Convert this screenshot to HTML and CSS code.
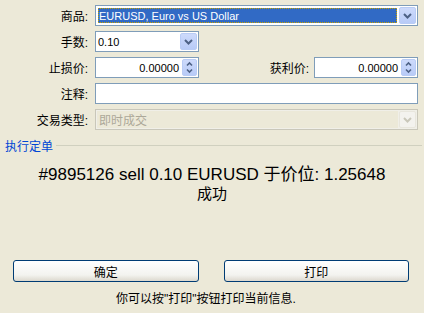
FILE: index.html
```html
<!DOCTYPE html>
<html lang="zh">
<head>
<meta charset="utf-8">
<link rel="stylesheet" href="styles.css">
</head>
<body>
<div class="dialog">
  <div class="form">
    <label class="lbl">商品:</label>
    <div class="combo wide focus">
      <div class="combo-text"><span class="sel">EURUSD, Euro vs US Dollar</span></div>
      <div class="btn-arrow"><svg width="9" height="6" viewBox="0 0 9 6"><path d="M1 1 L4.5 4.5 L8 1" fill="none" stroke="#4D6185" stroke-width="2"/></svg></div>
    </div>

    <label class="lbl">手数:</label>
    <div class="combo">
      <div class="combo-text latin">0.10</div>
      <div class="btn-arrow"><svg width="9" height="6" viewBox="0 0 9 6"><path d="M1 1 L4.5 4.5 L8 1" fill="none" stroke="#4D6185" stroke-width="2"/></svg></div>
    </div>
    <div class="span2"></div>

    <label class="lbl">止损价:</label>
    <div class="spin">
      <div class="spin-text">0.00000</div>
      <div class="spin-btn"><svg width="7" height="13" viewBox="0 0 7 13"><path d="M1 4.5 L3.5 2 L6 4.5 M1 8.5 L3.5 11 L6 8.5" fill="none" stroke="#4D6185" stroke-width="1.6"/></svg></div>
    </div>
    <label class="lbl lbl-r">获利价:</label>
    <div class="spin">
      <div class="spin-text">0.00000</div>
      <div class="spin-btn"><svg width="7" height="13" viewBox="0 0 7 13"><path d="M1 4.5 L3.5 2 L6 4.5 M1 8.5 L3.5 11 L6 8.5" fill="none" stroke="#4D6185" stroke-width="1.6"/></svg></div>
    </div>

    <label class="lbl">注释:</label>
    <div class="input wide"></div>

    <label class="lbl">交易类型:</label>
    <div class="combo wide disabled">
      <div class="combo-text">即时成交</div>
      <div class="btn-arrow"><svg width="9" height="6" viewBox="0 0 9 6"><path d="M1 1 L4.5 4.5 L8 1" fill="none" stroke="#C9C7BA" stroke-width="2"/></svg></div>
    </div>
  </div>

  <div class="group">
    <div class="group-head"><span class="group-title">执行定单</span><span class="group-line"></span></div>
    <div class="group-body">
      <div class="result">#9895126 sell 0.10 EURUSD 于价位: 1.25648</div>
      <div class="result-sub">成功</div>
    </div>
  </div>

  <div class="buttons">
    <button class="xp-btn">确定</button>
    <button class="xp-btn">打印</button>
  </div>
  <div class="hint">你可以按"打印"按钮打印当前信息.</div>
</div>
</body>
</html>
```

FILE: styles.css
```css
html, body {
  margin: 0;
  padding: 0;
}
body {
  background: #ECE9D8;
  font-family: "Liberation Sans", "Noto Sans CJK SC", sans-serif;
  font-size: 12px;
  color: #000;
  width: 424px;
  height: 313px;
  overflow: hidden;
}
.dialog {
  display: flex;
  flex-direction: column;
  height: 313px;
}
.form {
  display: grid;
  grid-template-columns: 88px 104px 1fr 104px;
  grid-auto-rows: 21px;
  column-gap: 7px;
  row-gap: 5px;
  padding: 5px 6px 0 0;
}
.lbl {
  display: flex;
  align-items: center;
  justify-content: flex-end;
  white-space: nowrap;
}
.lbl-r {
  margin-right: -2px;
}
.wide {
  grid-column: 2 / 5;
}
.span2 {
  grid-column: 3 / 5;
}
.combo, .spin, .input {
  box-sizing: border-box;
  border: 1px solid #7F9DB9;
  background: #fff;
  display: flex;
  align-items: stretch;
  height: 21px;
}
.combo-text {
  flex: 1;
  display: flex;
  align-items: center;
  padding-left: 2px;
  overflow: hidden;
  white-space: nowrap;
  font-size: 12px;
}
.latin {
  font-size: 11px;
}
.focus .combo-text {
  padding: 2px 1px 2px 2px;
  font-size: 11px;
}
.sel {
  flex: 1;
  align-self: stretch;
  display: flex;
  align-items: center;
  background: #316AC5;
  color: #fff;
  outline: 1px dotted #C9A400;
  outline-offset: -1px;
  padding-left: 1px;
}
.btn-arrow {
  width: 17px;
  margin: 1px;
  box-sizing: border-box;
  border: 1px solid #B9CCF5;
  border-radius: 2px;
  background: linear-gradient(#CDDAFB, #B8CBF7);
  display: flex;
  align-items: center;
  justify-content: center;
}
.disabled {
  border-color: #C9C7BA;
  background: #F0EFE8;
}
.disabled .combo-text {
  color: #ACA899;
  background: #ECE9D8;
  margin: 1px 0 1px 1px;
}
.disabled .btn-arrow {
  border-color: #E8E6DD;
  background: #F3F2EE;
}
.spin-text {
  flex: 1;
  display: flex;
  align-items: center;
  justify-content: flex-end;
  padding-right: 2px;
  font-size: 11px;
}
.spin-btn {
  width: 15px;
  margin: 1px;
  box-sizing: border-box;
  border: 1px solid #B9CCF5;
  border-radius: 2px;
  background: linear-gradient(#CDDAFB, #B8CBF7);
  display: flex;
  align-items: center;
  justify-content: center;
}
.group {
  margin-top: 7px;
  display: flex;
  flex-direction: column;
}
.group-head {
  display: flex;
  align-items: center;
  height: 16px;
}
.group-title {
  color: #0046D5;
  padding-left: 5px;
  padding-right: 3px;
}
.group-line {
  flex: 1;
  height: 1px;
  background: #D0D0BF;
  margin-right: 2px;
}
.group-body {
  text-align: center;
  padding-top: 12px;
}
.result {
  font-size: 17px;
  line-height: 20px;
}
.result-sub {
  font-size: 15px;
  line-height: 18px;
}
.buttons {
  display: flex;
  gap: 25px;
  padding: 0 15px 0 13px;
  margin-top: auto;
}
.xp-btn {
  flex: 1;
  height: 22px;
  border: 1px solid #003C74;
  border-radius: 3px;
  background: linear-gradient(#FFFFFF, #F3F3EF 70%, #DCD8CE);
  font-family: "Liberation Sans", "Noto Sans CJK SC", sans-serif;
  font-size: 12px;
  color: #000;
  padding: 0;
}
.hint {
  text-align: center;
  padding: 7px 12px 7px 0;
  font-size: 12px;
}
```
